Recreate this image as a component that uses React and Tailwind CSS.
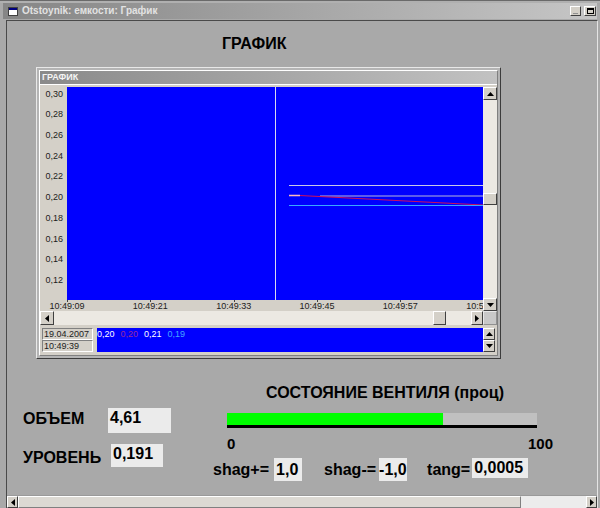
import React from 'react';

const raised = 'bg-[#d4d0c8] border border-t-white border-l-white border-r-[#404040] border-b-[#404040]';

function Tri({ dir }) {
  const pts = {
    up: '0,4 3.5,0 7,4',
    down: '0,0 3.5,4 7,0',
    left: '4,0 0,3.5 4,7',
    right: '0,0 4,3.5 0,7',
  }[dir];
  const vertical = dir === 'up' || dir === 'down';
  return (
    <svg width={vertical ? 7 : 4} height={vertical ? 4 : 7}>
      <polygon points={pts} fill="#000" />
    </svg>
  );
}

function Btn({ dir, className }) {
  return (
    <div className={`${raised} flex items-center justify-center shrink-0 ${className}`}>
      <Tri dir={dir} />
    </div>
  );
}

const yLabels = ['0,30', '0,28', '0,26', '0,24', '0,22', '0,20', '0,18', '0,16', '0,14', '0,12'];
const xLabels = ['10:49:09', '10:49:21', '10:49:33', '10:49:45', '10:49:57', '10:50:09'];

function Chart() {
  return (
    <div className="ml-[29px] mt-[14px] w-[465px] h-[292px] shrink-0 border border-t-[#e8e8e8] border-l-[#e8e8e8] border-r-[#3c3c3c] border-b-[#3c3c3c] bg-[#b4b4b4] p-[2px]">
      <div className="h-full flex flex-col bg-[#d4d0c8] border border-t-white border-l-white border-r-[#808080] border-b-[#808080]">
        <div className="h-[14px] shrink-0 flex items-center pl-[2px] bg-linear-to-r from-[#8a8a8a] to-[#c2c2c2] border-b border-white text-[9px] font-bold text-[#f4f4f4] leading-none">
          ГРАФИК
        </div>
        <div className="flex mt-[2px]">
          <div className="w-[443px] flex flex-col">
            <div className="flex h-[213px]">
              <div className="w-[27px] flex flex-col items-end pr-[4px] pt-[1.5px] gap-[9.74px] text-[9px] leading-[11px] text-[#1c1c1c]">
                {yLabels.map(l => <div key={l}>{l}</div>)}
              </div>
              <svg width="416" height="213" className="bg-[#0000ff] block">
                <line x1="208.5" y1="0" x2="208.5" y2="213" stroke="#d8d8f0" strokeWidth="1" />
                <line x1="222" y1="98.5" x2="416" y2="98.5" stroke="#c8c8e8" strokeWidth="1" />
                <line x1="253" y1="109" x2="416" y2="109" stroke="#b8b8d8" strokeWidth="1" />
                <line x1="233" y1="108.5" x2="416" y2="118" stroke="#d0105a" strokeWidth="1.2" />
                <line x1="222" y1="108.5" x2="233" y2="108.5" stroke="#ffb8b8" strokeWidth="1.5" />
                <line x1="222" y1="118.5" x2="416" y2="118.5" stroke="#3aa8ff" strokeWidth="1" />
              </svg>
            </div>
            <div className="h-[11px] overflow-hidden">
              <div className="flex ml-[-14.67px]">
                {xLabels.map(l => (
                  <div key={l} className="w-[83.33px] shrink-0 h-[11px] relative flex justify-center items-end">
                    <div className="absolute top-0 left-1/2 w-[1px] h-[2px] bg-[#404040]" />
                    <span className="text-[9px] leading-[9px] text-[#1c1c1c]">{l}</span>
                  </div>
                ))}
              </div>
            </div>
            <div className="h-[14px] flex bg-[#ece9e3]">
              <Btn dir="left" className="w-[14px]" />
              <div className="flex-1" />
              <div className={`${raised} w-[13px]`} />
              <div className="w-[25px]" />
              <Btn dir="right" className="w-[12px]" />
            </div>
          </div>
          <div className="w-[14px] flex flex-col">
            <div className="h-[224px] flex flex-col bg-[#ece9e3]">
              <Btn dir="up" className="h-[13px]" />
              <div className="h-[93px]" />
              <div className={`${raised} h-[12px]`} />
              <div className="h-[93px]" />
              <Btn dir="down" className="h-[13px]" />
            </div>
            <div className="h-[14px] bg-[#c8c8c8] border border-t-[#e8e8e8] border-l-[#e8e8e8] border-r-[#909090] border-b-[#909090]" />
          </div>
        </div>
        <div className="flex mt-[3px] h-[25px]">
          <div className="ml-[2px] w-[51px] flex flex-col text-[9px] leading-[10px] text-[#1c1c1c]">
            <div className="h-[12px] pl-[1px] border border-t-[#808080] border-l-[#808080] border-r-white border-b-white">19.04.2007</div>
            <div className="h-[12px] pl-[1px] border border-t-[#808080] border-l-[#808080] border-r-white border-b-white">10:49:39</div>
          </div>
          <div className="ml-[4px] w-[386px] h-[24px] bg-[#0000ff] flex items-start gap-[6px] pt-[1px] text-[9px] leading-[11px]">
            <span className="text-white">0,20</span>
            <span className="text-[#9a2a9a]">0,20</span>
            <span className="text-white">0,21</span>
            <span className="text-[#44a8ff]">0,19</span>
          </div>
          <div className="w-[12px] flex flex-col">
            <Btn dir="up" className="h-[12px]" />
            <Btn dir="down" className="h-[12px]" />
          </div>
        </div>
      </div>
    </div>
  );
}

function ValueBox({ children, className }) {
  return (
    <div className={`bg-[#ebebeb] text-[16px] font-bold leading-[18px] text-black ${className}`}>{children}</div>
  );
}

export default function App() {
  return (
    <div className="w-[600px] h-[508px] overflow-hidden bg-[#a9a9a9] font-['Liberation_Sans',Arial,sans-serif] flex flex-col">
      <div className="h-[3px] shrink-0 bg-[#b0b0b0] border-t border-[#6a6a6a]" />
      <div className="h-[16px] shrink-0 mx-[3px] flex items-center bg-linear-to-r from-[#868686] to-[#c6c6c6]">
        <div className="ml-[5px] w-[10px] h-[9px] bg-white border border-[#404040] flex flex-col">
          <div className="h-[2px] bg-[#000080]" />
        </div>
        <span className="ml-[4px] text-[10px] font-bold text-[#e2e2e2] leading-none">Otstoynik: емкости: График</span>
        <div className="ml-auto flex items-center gap-[3px] mr-[1px]">
          <div className={`${raised} w-[11px] h-[10px] flex items-end justify-center pb-[1px]`}>
            <div className="w-[5px] h-[1px] bg-[#909090]" />
          </div>
          <div className={`${raised} w-[12px] h-[10px] flex items-center justify-center`}>
            <div className="w-[7px] h-[6px] border border-black border-t-2" />
          </div>
        </div>
      </div>
      <div className="h-[1px] shrink-0" />
      <div className="flex-1 min-h-0 ml-[6px] mr-[2px] border-t border-l border-[#4a4a4a] border-r border-r-[#e4e4e4] flex flex-col">
        <div className="mt-[14px] pl-[215px] h-[18px] shrink-0 text-[16px] leading-[18px] font-bold text-black">ГРАФИК</div>
        <Chart />
        <div className="flex-1 flex">
          <div className="w-[206px] pl-[16px] flex flex-col">
            <div className="mt-[49px] flex items-start">
              <div className="w-[85px] mt-[2px] text-[16px] leading-[18px] font-bold text-black">ОБЪЕМ</div>
              <ValueBox className="w-[63px] h-[25px] pt-[1px] pl-[2px]">4,61</ValueBox>
            </div>
            <div className="mt-[11px] flex items-start">
              <div className="w-[88px] mt-[5px] text-[16px] leading-[18px] font-bold text-black">УРОВЕНЬ</div>
              <ValueBox className="w-[52px] h-[23px] pt-[1px] pl-[2px]">0,191</ValueBox>
            </div>
          </div>
          <div className="flex flex-col">
            <div className="mt-[25px] pl-[53px] text-[16px] leading-[18px] font-bold text-black whitespace-nowrap">
              СОСТОЯНИЕ ВЕНТИЛЯ (проц)
            </div>
            <div className="mt-[11px] ml-[14px] w-[310px] flex flex-col">
              <div className="h-[12px] bg-[#c0c0c0] flex">
                <div className="w-[216px] bg-[#00ff00]" />
              </div>
              <div className="h-[3px] bg-black" />
            </div>
            <div className="mt-[7px] ml-[14px] w-[326px] flex justify-between text-[15px] leading-[17px] font-bold text-black">
              <span>0</span>
              <span>100</span>
            </div>
            <div className="mt-[6px] flex items-center text-[16px] leading-[18px] font-bold text-black whitespace-nowrap">
              <span>shag+=</span>
              <ValueBox className="ml-[5px] w-[28px] h-[23px] flex items-center pl-[2px]">1,0</ValueBox>
              <span className="ml-[22px]">shag-=</span>
              <ValueBox className="ml-[3px] w-[28px] h-[23px] flex items-center">-1,0</ValueBox>
              <span className="ml-[20px]">tang=</span>
              <ValueBox className="ml-[2px] w-[56px] h-[20px] self-start flex items-center pl-[2px]">0,0005</ValueBox>
            </div>
          </div>
        </div>
        <div className="h-[13px] shrink-0 flex bg-[#ececec] border-t border-[#9a9a9a]">
          <Btn dir="left" className="w-[11px]" />
          <div className="w-[503px] bg-[#dcd9d3] border border-t-white border-l-white border-r-[#808080] border-b-[#808080]" />
          <div className="flex-1" />
          <Btn dir="right" className="w-[11px]" />
        </div>
      </div>
    </div>
  );
}
